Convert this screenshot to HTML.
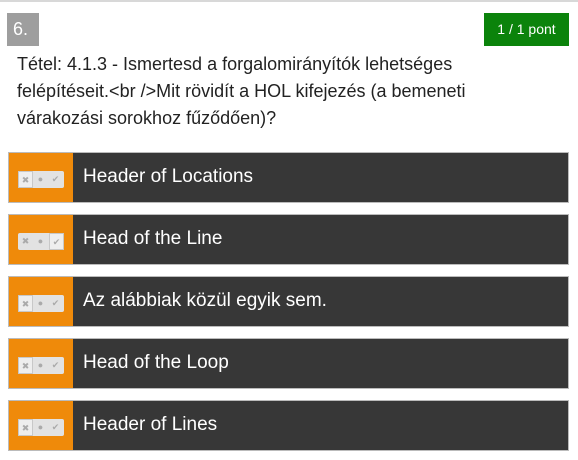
<!DOCTYPE html>
<html><head><meta charset="utf-8"><style>
*{margin:0;padding:0;box-sizing:border-box}
body{width:578px;height:460px;background:#fff;font-family:"Liberation Sans",Roboto,sans-serif;position:relative;overflow:hidden}
.topline{position:absolute;left:0;top:0;width:578px;height:2px;background:#d8d8d8}
.num{position:absolute;left:7px;top:13px;width:32px;height:33px;background:#9e9e9e;color:#fff;font-size:18px;line-height:33px;padding-left:6px}
.pont{position:absolute;left:484px;top:13px;width:85px;height:33px;background:#0b830b;color:#fff;font-size:14px;line-height:33px;text-align:center}
.q{position:absolute;left:17px;top:51px;width:560px;font-size:18px;line-height:27px;color:#222;white-space:nowrap}
.row{position:absolute;left:8px;width:561px;height:51px;background:#373737;border:1px solid #bbb}
.or{position:absolute;left:0;top:0;width:64px;height:49px;background:#ef8a0a}
.w{position:absolute;left:9px;top:18px;width:46px;height:17px;background:#e2e2e2;border-radius:2px}
.w span{position:absolute;top:0;height:17px;width:15px;font-size:9px;line-height:17px;text-align:center;color:#aaa}
.w .s{border:1px solid #c8c8c8;background:#eee}
.t{position:absolute;left:74px;top:0;line-height:47px;color:#fff;font-size:19px}
</style></head><body>
<div class="topline"></div>
<div class="num">6.</div>
<div class="pont">1 / 1 pont</div>
<div class="q">Tétel: 4.1.3 - Ismertesd a forgalomirányítók lehetséges<br>felépítéseit.&lt;br /&gt;Mit rövidít a HOL kifejezés (a bemeneti<br>várakozási sorokhoz fűződően)?</div>

<div class="row" style="top:152px"><div class="or"><div class="w"><span class="s" style="left:0">✖</span><span style="left:15px">●</span><span style="left:30px">✔</span></div></div><div class="t">Header of Locations</div></div>
<div class="row" style="top:214px"><div class="or"><div class="w"><span style="left:0">✖</span><span style="left:15px">●</span><span class="s" style="left:31px">✔</span></div></div><div class="t">Head of the Line</div></div>
<div class="row" style="top:276px"><div class="or"><div class="w"><span class="s" style="left:0">✖</span><span style="left:15px">●</span><span style="left:30px">✔</span></div></div><div class="t">Az alábbiak közül egyik sem.</div></div>
<div class="row" style="top:338px"><div class="or"><div class="w"><span class="s" style="left:0">✖</span><span style="left:15px">●</span><span style="left:30px">✔</span></div></div><div class="t">Head of the Loop</div></div>
<div class="row" style="top:400px"><div class="or"><div class="w"><span class="s" style="left:0">✖</span><span style="left:15px">●</span><span style="left:30px">✔</span></div></div><div class="t">Header of Lines</div></div>
</body></html>
